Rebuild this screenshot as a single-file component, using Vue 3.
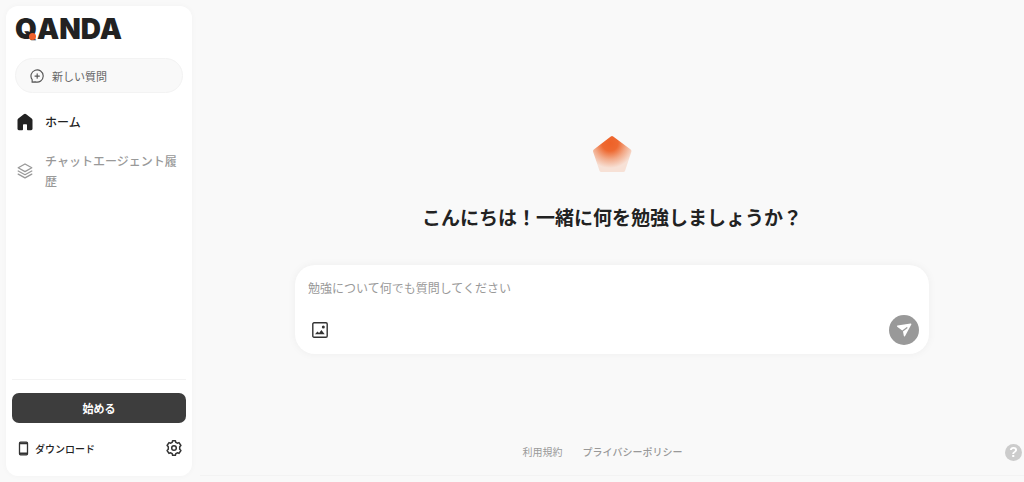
<script setup>
import { ref } from 'vue'

const question = ref('')
</script>

<template>
  <div class="app">
    <aside class="sidebar">
      <a class="logo" href="#" aria-label="QANDA"><span class="logo-q">Q</span>ANDA</a>

      <button class="new-question" type="button">
        <svg width="14" height="14" viewBox="0 0 16 16" fill="none" stroke="#555" stroke-width="1.3" stroke-linecap="round" stroke-linejoin="round">
          <path d="M2.400 15 2.500 12.200A7 7 0 1 1 6 14.700L2.400 15Z" />
          <path d="M8.200 5.600v5M5.700 8.100h5" />
        </svg>
        <span>新しい質問</span>
      </button>

      <nav class="nav">
        <a class="nav-item active" href="#">
          <svg width="16" height="18" viewBox="0 0 16 18" fill="#222">
            <path d="M6.800 1.200a2 2 0 0 1 2.400 0l5.500 4.300c.5.400.8 1 .8 1.600v8.700c0 .8-.6 1.400-1.400 1.400h-3.300c-.5 0-.8-.3-.8-.8v-4.200c0-.6-.4-1-1-1H7c-.6 0-1 .4-1 1v4.200c0 .5-.3.800-.8.800H1.900c-.8 0-1.400-.6-1.400-1.400V7.100c0-.6.300-1.200.8-1.600z" />
          </svg>
          <span>ホーム</span>
        </a>
        <a class="nav-item" href="#">
          <svg width="16" height="16" viewBox="0 0 16 16" fill="none" stroke="#999" stroke-width="1.300" stroke-linejoin="round" stroke-linecap="round">
            <path d="M8 1 14.800 4.800 8 8.600 1.200 4.800Z" />
            <path d="M1.200 8 8 11.700 14.800 8M1.200 11.100 8 14.900l6.800-3.800" />
          </svg>
          <span>チャットエージェント履歴</span>
        </a>
      </nav>

      <div class="sidebar-bottom">
        <button class="start" type="button">始める</button>
        <div class="tools">
          <a class="download" href="#">
            <svg width="11" height="15" viewBox="0 0 11 15">
              <rect x="1.500" y="1.200" width="8" height="12.600" rx="1" fill="none" stroke="#333" stroke-width="1.300" />
              <path d="M1.500 2.400h8M1.500 12.500h8" stroke="#333" stroke-width="1.800" />
            </svg>
            <span>ダウンロード</span>
          </a>
          <button class="settings" type="button" aria-label="設定">
            <svg width="18" height="18" viewBox="0 0 18 18" fill="none" stroke="#333" stroke-width="1.500" stroke-linejoin="round">
              <path d="M7.200 3.300 7.600 1.700h2.800l.4 1.600 1.500.9 1.700-.6 1.900 2.900-1.200 1.300v2.400l1.200 1.300-1.900 2.900-1.700-.6-1.500.9-.4 1.600H7.600l-.4-1.600-1.500-.9-1.700.6-1.900-2.900 1.200-1.300V7.800L2.100 6.500 4 3.600l1.700.6z" />
              <circle cx="9" cy="9" r="2.300" />
            </svg>
          </button>
        </div>
      </div>
    </aside>

    <main class="main">
      <section class="hero">
        <svg class="gem" width="40" height="38" viewBox="0 0 40 38">
          <defs>
            <radialGradient id="glow" gradientUnits="userSpaceOnUse" cx="18" cy="8" r="25">
              <stop offset="0" stop-color="#ee6127" />
              <stop offset=".32" stop-color="#ee6931" />
              <stop offset=".65" stop-color="#f2aa89" />
              <stop offset="1" stop-color="#f7e1d6" />
            </radialGradient>
          </defs>
          <path d="M18.800 1.500q1.200-.9 2.400 0l17.500 13q1.100.8.700 2.200l-6.300 19q-.4 1.300-1.800 1.300H9.300q-1.400 0-1.800-1.300L1.100 16.700q-.4-1.400.7-2.200z" fill="url(#glow)" />
        </svg>
        <h1>こんにちは！一緒に何を勉強しましょうか？</h1>
        <form class="composer" @submit.prevent>
          <input v-model="question" type="text" aria-label="質問" placeholder="勉強について何でも質問してください" />
          <div class="actions">
            <button class="image" type="button" aria-label="画像を追加">
              <svg width="16" height="16" viewBox="0 0 16 16" fill="#333">
                <rect x=".8" y=".8" width="14.400" height="14.400" rx="1.200" fill="none" stroke="#333" stroke-width="1.400" />
                <circle cx="11.300" cy="4.900" r="1.500" />
                <path d="m3 12.300 2.400-2.900 1.700 1.500 2.300-3 3.300 4.400z" />
              </svg>
            </button>
            <button class="send" type="submit" aria-label="送信">
              <svg width="16" height="14" viewBox="0 0 16 14">
                <path d="M1.500 2.500 14.600.5q1.200-.1.700 1L9.100 13q-.8 1.100-1.300-.2L6.900 8.100 1.500 4Q.4 2.800 1.500 2.500Z" fill="#fff" />
                <path d="m6.900 7.700 4-2.900" stroke="#999" stroke-width="1.300" stroke-linecap="round" />
              </svg>
            </button>
          </div>
        </form>
      </section>

      <footer class="footer">
        <a href="#">利用規約</a>
        <a class="privacy" href="#">プライバシーポリシー</a>
      </footer>
    </main>

    <button class="help" type="button" aria-label="ヘルプ">?</button>
  </div>
</template>

<style>
body {
  background: #f9f9f9;
}
</style>

<style scoped>
.app,
.app * {
  box-sizing: border-box;
}
.app {
  display: grid;
  grid-template-columns: 200px minmax(0, 1fr);
  min-height: 100vh;
  padding-bottom: 6px;
  color: #222;
  font-family: "Noto Sans CJK JP", sans-serif;
}
button {
  padding: 0;
  border: 0;
  background: none;
  font-family: inherit;
  cursor: pointer;
}
a {
  color: inherit;
  text-decoration: none;
}
svg {
  display: block;
  flex: none;
}
.sidebar {
  display: flex;
  flex-direction: column;
  margin: 6px 8px 0 6px;
  padding: 8px 6px 19px;
  border-radius: 12px;
  background: #fff;
  box-shadow: 0 0 6px rgba(0, 0, 0, 0.03);
}
.logo {
  align-self: flex-start;
  margin-left: 3px;
  font-family: Inter, sans-serif;
  font-size: 28px;
  font-weight: 900;
  line-height: 30px;
}
.logo-q {
  position: relative;
}
.logo-q::after {
  content: "";
  position: absolute;
  right: 1px;
  bottom: 6px;
  width: 7px;
  height: 7px;
  border-radius: 50%;
  background: #f0602a;
}
.new-question {
  display: flex;
  align-items: center;
  gap: 8px;
  height: 35px;
  margin: 14px 3px 0;
  padding: 0 14px;
  border: 1px solid #f3f3f3;
  border-radius: 18px;
  background: #f9f9f9;
  color: #666;
  font-size: 11px;
}
.nav {
  display: grid;
  gap: 19px;
  margin-top: 19px;
}
.nav-item {
  display: flex;
  align-items: center;
  gap: 12px;
  padding-left: 5px;
  color: #999;
  font-size: 12px;
  font-weight: 500;
  line-height: 20px;
}
.nav-item.active {
  color: #222;
}
.sidebar-bottom {
  margin-top: auto;
  padding-top: 13px;
  border-top: 1px solid #f3f3f3;
}
.start {
  width: 100%;
  height: 30px;
  border-radius: 7px;
  background: #3d3d3d;
  color: #fff;
  font-size: 11px;
  font-weight: 700;
}
.tools {
  display: flex;
  align-items: center;
  justify-content: space-between;
  margin-top: 16px;
  padding: 0 3px 0 6px;
}
.download {
  display: flex;
  align-items: center;
  gap: 6px;
  font-size: 10px;
  font-weight: 500;
}
.main {
  display: flex;
  flex-direction: column;
  border-bottom: 1px solid #f3f3f3;
}
.hero {
  display: flex;
  flex: 1;
  flex-direction: column;
  align-items: center;
  justify-content: center;
  padding-top: 44px;
}
h1 {
  margin: 30px 0 34px;
  font-size: 19px;
  font-weight: 700;
  line-height: 28px;
  text-align: center;
}
.composer {
  width: calc(100% - 48px);
  max-width: 634px;
  padding: 12px 10px 9px 13px;
  border-radius: 20px;
  background: #fff;
  box-shadow: 0 0 8px rgba(0, 0, 0, 0.05);
}
.composer input {
  display: block;
  width: 100%;
  height: 22px;
  padding: 0;
  border: 0;
  outline: 0;
  background: none;
  color: #222;
  font-family: inherit;
  font-size: 12px;
}
.composer input::placeholder {
  color: #999;
  opacity: 1;
}
.actions {
  display: flex;
  align-items: center;
  justify-content: space-between;
  margin-top: 16px;
  padding-left: 4px;
}
.send {
  display: grid;
  place-items: center;
  width: 30px;
  height: 30px;
  border-radius: 50%;
  background: #999;
}
.footer {
  display: flex;
  justify-content: center;
  gap: 20px;
  padding: 0 19px 15px 0;
  color: #999;
  font-size: 10px;
  line-height: 16px;
}
.privacy {
  font-weight: 500;
}
.help {
  position: fixed;
  right: 2px;
  bottom: 21px;
  width: 17px;
  height: 17px;
  border-radius: 50%;
  background: #ccc;
  color: #fff;
  font-family: "Liberation Sans", sans-serif;
  font-size: 14px;
  font-weight: 700;
  line-height: 17px;
}
</style>
